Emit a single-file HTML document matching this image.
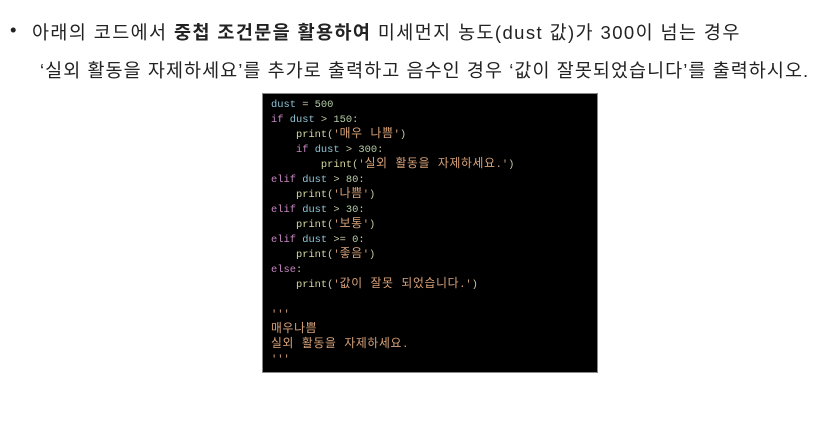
<!DOCTYPE html>
<html><head><meta charset="utf-8"><style>
body{margin:0;width:837px;height:423px;background:#fff;overflow:hidden;position:relative;font-family:"Liberation Sans","Noto Sans CJK KR",sans-serif;color:#222}
.t{position:absolute;font-size:18.5px;white-space:nowrap;letter-spacing:1.05px}
.code{position:absolute;left:262px;top:93px;width:336px;height:280px;background:#000;border:1px solid #888;box-sizing:border-box}
pre{margin:0;position:absolute;left:8px;top:4px;font-family:"Liberation Mono","Noto Sans CJK KR",monospace;font-size:10.4px;line-height:15px;color:#c9c9a8}
.v{color:#8fc3d6}.k{color:#c586c0}.n{color:#b5cea8}.p{color:#d7d7a0}.s{color:#d9a37a}.o{color:#d9a37a}
.h{font-size:11.8px;letter-spacing:0.7px;line-height:10px}
</style></head><body>
<div class="t" style="left:10px;top:19px">•</div>
<div class="t" style="left:32px;top:19px;letter-spacing:1.4px">아래의 코드에서 <b>중첩 조건문을 활용하여</b> 미세먼지 농도(dust 값)가 300이 넘는 경우</div>
<div class="t" style="left:40px;top:57px">‘실외 활동을 자제하세요’를 추가로 출력하고 음수인 경우 ‘값이 잘못되었습니다’를 출력하시오.</div>
<div class="code"><pre><span class="v">dust</span> = <span class="n">500</span>
<span class="k">if</span> <span class="v">dust</span> &gt; <span class="n">150</span>:
    <span class="p">print</span>(<span class="s">'<span class="h">매우 나쁨</span>'</span>)
    <span class="k">if</span> <span class="v">dust</span> &gt; <span class="n">300</span>:
        <span class="p">print</span>(<span class="s">'<span class="h">실외 활동을 자제하세요</span>.'</span>)
<span class="k">elif</span> <span class="v">dust</span> &gt; <span class="n">80</span>:
    <span class="p">print</span>(<span class="s">'<span class="h">나쁨</span>'</span>)
<span class="k">elif</span> <span class="v">dust</span> &gt; <span class="n">30</span>:
    <span class="p">print</span>(<span class="s">'<span class="h">보통</span>'</span>)
<span class="k">elif</span> <span class="v">dust</span> &gt;= <span class="n">0</span>:
    <span class="p">print</span>(<span class="s">'<span class="h">좋음</span>'</span>)
<span class="k">else</span>:
    <span class="p">print</span>(<span class="s">'<span class="h">값이 잘못 되었습니다</span>.'</span>)

<span class="o">'''
<span class="h">매우나쁨</span>
<span class="h">실외 활동을 자제하세요</span>.
'''</span></pre></div>
</body></html>
